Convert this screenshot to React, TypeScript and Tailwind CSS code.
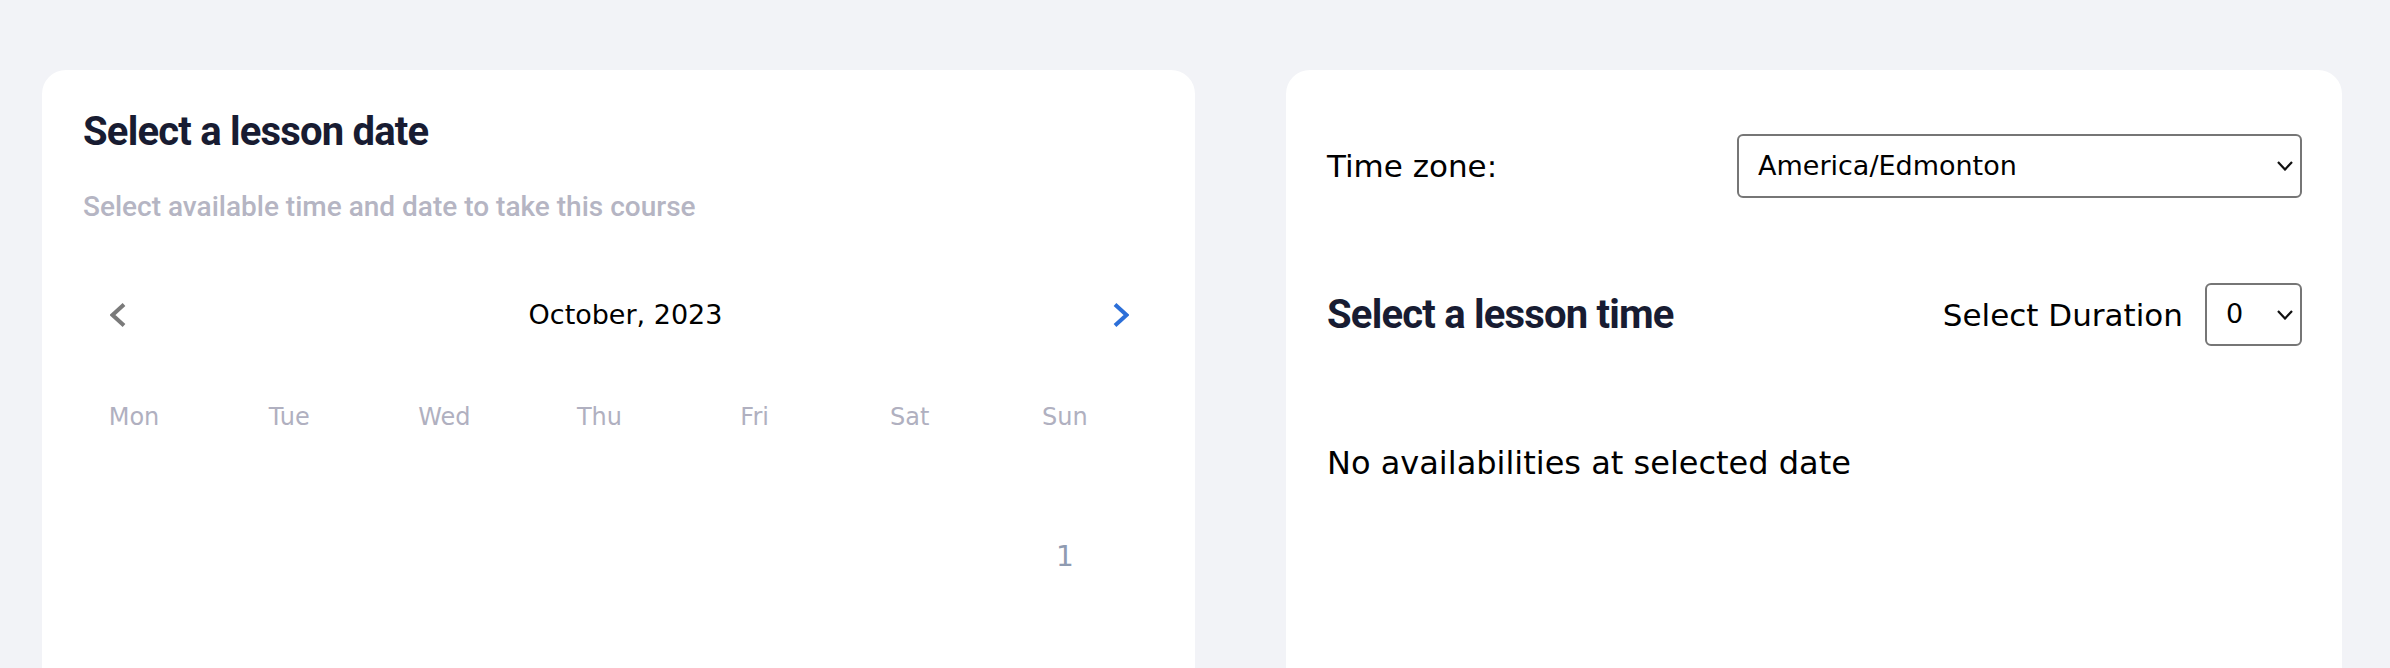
import React from "react";

const weekDays = ["Mon", "Tue", "Wed", "Thu", "Fri", "Sat", "Sun"];

// first week of October 2023 (the 1st is a Sunday)
const firstWeek: (number | null)[] = [null, null, null, null, null, null, 1];

function Chevron({ dir, color }: { dir: "left" | "right"; color: string }) {
  return (
    <svg width="16" height="24" viewBox="0 0 16 24" fill="none">
      <polyline
        points={dir === "left" ? "14,1.5 2.5,12 14,22.5" : "2,1.5 13.5,12 2,22.5"}
        stroke={color}
        strokeWidth="4"
        strokeLinejoin="miter"
      />
    </svg>
  );
}

function SelectArrow() {
  return (
    <svg
      width="16"
      height="10"
      viewBox="0 0 16 10"
      fill="none"
      className="pointer-events-none absolute right-[9px] top-1/2 -translate-y-1/2"
    >
      <polyline points="1,1 8,8.5 15,1" stroke="#111" strokeWidth="2.2" />
    </svg>
  );
}

function Calendar() {
  return (
    <div className="flex flex-col">
      <div className="mt-[68px] flex h-[48px] items-center justify-between pl-[27px] pr-[25px]">
        <button className="flex items-center">
          <Chevron dir="left" color="#7a7a7a" />
        </button>
        <div className="flex-1 pl-3 text-center font-['DejaVu_Sans',sans-serif] text-[27px] leading-[36px] text-black">
          October, 2023
        </div>
        <button className="flex items-center">
          <Chevron dir="right" color="#2c6fd8" />
        </button>
      </div>

      <div className="mt-[62px] flex w-[1033px] justify-between">
        {weekDays.map((d) => (
          <div
            key={d}
            className="w-[102px] text-center font-['DejaVu_Sans',sans-serif] text-[24px] leading-[32px] text-[#b0b0c0]"
          >
            {d}
          </div>
        ))}
      </div>

      <div className="mt-[54px] flex h-[140px] w-[1033px] justify-between">
        {firstWeek.map((day, j) => (
          <div
            key={j}
            className="flex w-[102px] items-center justify-center font-['DejaVu_Sans',sans-serif] text-[28px] leading-[36px] text-[#8f9bb1]"
          >
            {day ?? ""}
          </div>
        ))}
      </div>
    </div>
  );
}

export default function App() {
  return (
    <div className="flex min-h-screen gap-[91px] bg-[#f2f3f7] pl-[42px] pr-[48px] pt-[70px]">
      <div className="min-h-[640px] w-[1153px] shrink-0 rounded-[24px] bg-white px-[41px] pt-[38px]">
        <h2 className="font-['Roboto',sans-serif] text-[40px] font-bold leading-[48px] tracking-[-0.8px] text-[#181c32]">
          Select a lesson date
        </h2>
        <p className="mt-[35px] font-['Roboto',sans-serif] text-[28px] font-medium leading-[32px] text-[#b5b5c3]">
          Select available time and date to take this course
        </p>
        <Calendar />
      </div>

      <div className="min-h-[640px] w-[1056px] shrink-0 rounded-[24px] bg-white pl-[41px] pr-[40px] pt-[64px] font-['DejaVu_Sans',sans-serif] text-black">
        <div className="flex h-[64px] items-center">
          <label className="flex-1 text-[31px] leading-[40px]">Time zone:</label>
          <div className="relative h-[64px] w-[565px]">
            <select
              defaultValue="America/Edmonton"
              className="h-full w-full appearance-none rounded-[6px] border-2 border-[#767676] bg-white pl-[19px] pr-[40px] font-['DejaVu_Sans',sans-serif] text-[27px] text-black outline-none"
            >
              <option>America/Edmonton</option>
            </select>
            <SelectArrow />
          </div>
        </div>

        <div className="mt-[85px] flex h-[63px] items-center">
          <h2 className="flex-1 font-['Roboto',sans-serif] text-[40px] font-bold leading-[48px] tracking-[-0.8px] text-[#181c32]">
            Select a lesson time
          </h2>
          <span className="mr-[22px] text-[31px] leading-[40px]">Select Duration</span>
          <div className="relative h-[63px] w-[97px]">
            <select
              defaultValue="0"
              className="h-full w-full appearance-none rounded-[6px] border-2 border-[#767676] bg-white pl-[19px] font-['DejaVu_Sans',sans-serif] text-[27px] text-black outline-none"
            >
              <option>0</option>
            </select>
            <SelectArrow />
          </div>
        </div>

        <p className="mt-[97px] text-[32px] leading-[40px]">No availabilities at selected date</p>
      </div>
    </div>
  );
}
